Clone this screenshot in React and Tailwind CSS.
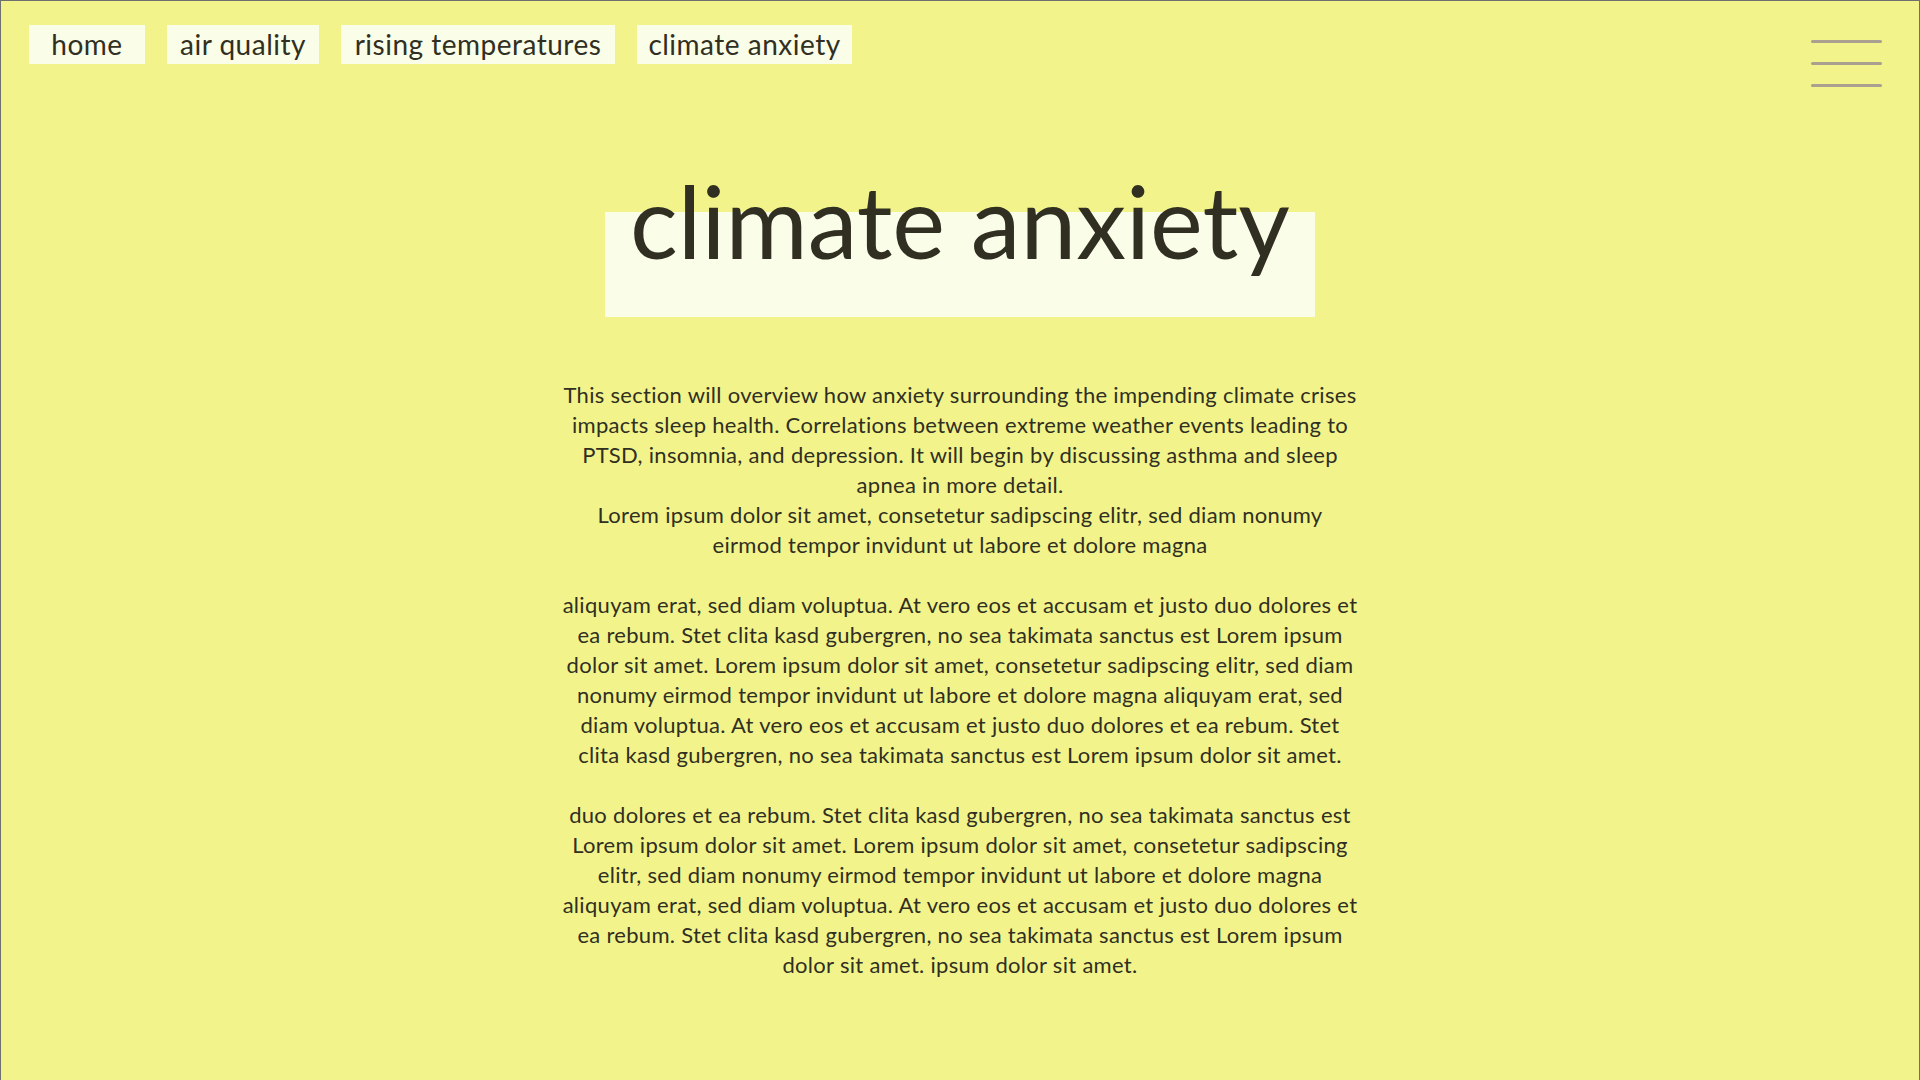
import React from "react";

const navItems = [
  { label: "home", w: "w-[116px]" },
  { label: "air quality", w: "w-[152px]" },
  { label: "rising temperatures", w: "w-[274px]" },
  { label: "climate anxiety", w: "w-[215px]" },
];

const p1 = [
  "This section will overview how anxiety surrounding the impending climate crises",
  "impacts sleep health. Correlations between extreme weather events leading to",
  "PTSD, insomnia, and depression. It will begin by discussing asthma and sleep",
  "apnea in more detail.",
  "Lorem ipsum dolor sit amet, consetetur sadipscing elitr, sed diam nonumy",
  "eirmod tempor invidunt ut labore et dolore magna",
];
const p2 = [
  "aliquyam erat, sed diam voluptua. At vero eos et accusam et justo duo dolores et",
  "ea rebum. Stet clita kasd gubergren, no sea takimata sanctus est Lorem ipsum",
  "dolor sit amet. Lorem ipsum dolor sit amet, consetetur sadipscing elitr, sed diam",
  "nonumy eirmod tempor invidunt ut labore et dolore magna aliquyam erat, sed",
  "diam voluptua. At vero eos et accusam et justo duo dolores et ea rebum. Stet",
  "clita kasd gubergren, no sea takimata sanctus est Lorem ipsum dolor sit amet.",
];
const p3 = [
  "duo dolores et ea rebum. Stet clita kasd gubergren, no sea takimata sanctus est",
  "Lorem ipsum dolor sit amet. Lorem ipsum dolor sit amet, consetetur sadipscing",
  "elitr, sed diam nonumy eirmod tempor invidunt ut labore et dolore magna",
  "aliquyam erat, sed diam voluptua. At vero eos et accusam et justo duo dolores et",
  "ea rebum. Stet clita kasd gubergren, no sea takimata sanctus est Lorem ipsum",
  "dolor sit amet. ipsum dolor sit amet.",
];

function Para({ lines, className = "" }) {
  return (
    <p className={className}>
      {lines.map((l, i) => (
        <span key={i} className="block whitespace-nowrap">
          {l}
        </span>
      ))}
    </p>
  );
}

export default function App() {
  return (
    <div
      className="w-full h-screen overflow-hidden bg-[#f2f48b] border-t border-x border-[#707070] text-[#302f22]"
      style={{ fontFamily: "Lato, 'Open Sans', sans-serif" }}
    >
      <header className="flex items-start justify-between pl-[28px] pr-[37px] pt-[24px]">
        <nav className="flex gap-[22px]">
          {navItems.map((n) => (
            <a
              key={n.label}
              className={`${n.w} h-[39px] pb-[2px] flex items-center justify-center bg-[#fafde8] text-[28px] tracking-[0.5px] leading-none whitespace-nowrap`}
            >
              {n.label}
            </a>
          ))}
        </nav>
        <button className="mt-[15px] w-[71px] flex flex-col gap-[19px]" aria-label="menu">
          <span className="block h-[3px] w-full bg-[#aaa08f] rounded-full" />
          <span className="block h-[3px] w-full bg-[#aaa08f] rounded-full" />
          <span className="block h-[3px] w-full bg-[#aaa08f] rounded-full" />
        </button>
      </header>

      <main className="flex flex-col items-center">
        <div className="mt-[125px] w-[710px] h-[105px] bg-[#fafde8] flex justify-center">
          <h1 className="-mt-[42px] text-[100px] leading-[100px] whitespace-nowrap">
            climate anxiety
          </h1>
        </div>

        <div className="mt-[63px] text-center text-[22px] tracking-[0.3px] leading-[30px]">
          <Para lines={p1} />
          <Para lines={p2} className="mt-[30px]" />
          <Para lines={p3} className="mt-[30px]" />
        </div>
      </main>
    </div>
  );
}
